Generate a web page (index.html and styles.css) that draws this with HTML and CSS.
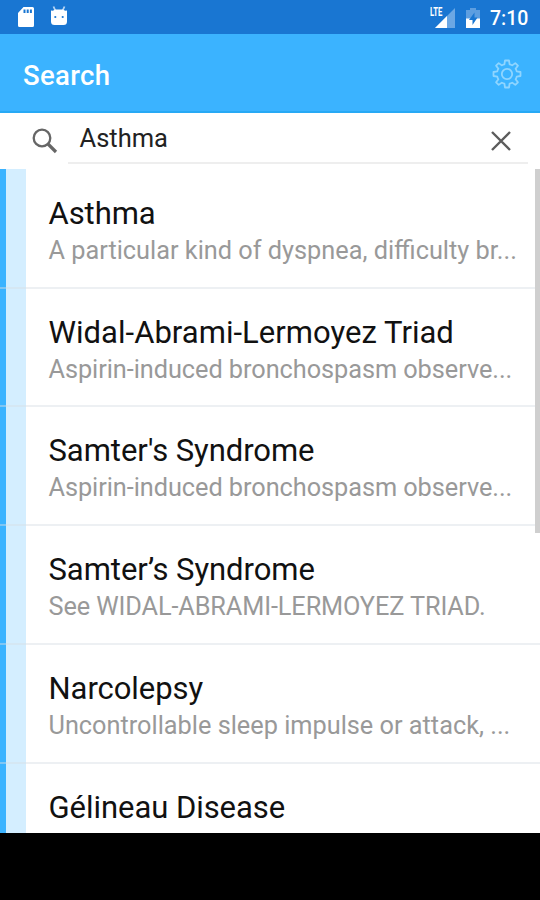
FILE: index.html
```html
<!DOCTYPE html>
<html lang="en">
<head>
<meta charset="utf-8">
<title>Search</title>
<link rel="stylesheet" href="styles.css">
</head>
<body>
<div class="screen">
  <header class="status">
    <svg class="sd" viewBox="0 0 16 20"><path fill="#fff" fill-rule="evenodd" d="M5.5 0H14.5Q16 0 16 1.500V18.500Q16 20 14.500 20H1.500Q0 20 0 18.500V6ZM5.500 2.500V6H7.500V2.500ZM8.700 2.500V6H10.700V2.500ZM11.900 2.500V6H13.900V2.500Z"/></svg>
    <svg class="droid" viewBox="0 0 18 20"><path d="M3.500 0.500L5.500 5M14.500 0.500L12.500 5" stroke="#b5d3f3" stroke-width="1.800"/><path fill="#fff" d="M1 4.500Q4 5 5 3.500H13Q14 5 17 4.500V15.500Q17 19 13.500 19H4.500Q1 19 1 15.500Z"/><circle cx="5.300" cy="11" r="1.100" fill="#1976d2"/><circle cx="12.700" cy="11" r="1.100" fill="#1976d2"/></svg>
    <span class="spacer"></span>
    <div class="signal"><svg viewBox="0 0 20 20"><path fill="#6ba7e4" d="M20 0V20H0Z"/><path fill="#fff" d="M12 8V20H0Z"/></svg><span class="lte">LTE</span></div>
    <svg class="battery" viewBox="0 0 14 20"><path fill="#5d9ee0" d="M4 0H10V2H14V11H0V2H4Z"/><path fill="#fff" d="M0 10.500H14V20H0Z"/><path fill="#1976d2" d="M8.500 4.500L3 12H6.500V17L11.500 9.500H8.500Z"/></svg>
    <span class="clock">7:10</span>
  </header>
  <div class="appbar">
    <h1>Search</h1>
    <svg class="gear" viewBox="-15 -15 30 30" fill="none" stroke="#8fd5ff" stroke-width="1.800" stroke-linejoin="round"><circle r="5.200"/><path d="M-2 -13.500H2L2.600 -9.700Q4 -9.500 5.200 -8.600L8.300 -10.900L10.900 -8.300L8.600 -5.200Q9.500 -4 9.700 -2.600L13.500 -2V2L9.700 2.600Q9.500 4 8.600 5.200L10.900 8.300L8.300 10.900L5.200 8.600Q4 9.500 2.600 9.700L2 13.500H-2L-2.600 9.700Q-4 9.500 -5.200 8.600L-8.300 10.900L-10.900 8.300L-8.600 5.200Q-9.500 4 -9.700 2.600L-13.500 2V-2L-9.700 -2.600Q-9.500 -4 -8.600 -5.200L-10.900 -8.300L-8.300 -10.900L-5.200 -8.600Q-4 -9.500 -2.600 -9.700Z"/></svg>
  </div>
  <div class="searchbar">
    <svg class="lens" viewBox="0 0 26 26" fill="none" stroke="#666"><circle cx="10" cy="10" r="8.300" stroke-width="2.300"/><path d="M16 16L24 24" stroke-width="3.200"/></svg>
    <div class="field"><span>Asthma</span>
      <svg class="clear" viewBox="0 0 20 20" stroke="#5c5c5c" stroke-width="2.400"><path d="M1 1L19 19M19 1L1 19"/></svg>
    </div>
  </div>
  <main class="results">
    <article class="row"><h2>Asthma</h2><p class="loose">A particular kind of dyspnea, difficulty br...</p></article>
    <article class="row"><h2 class="wide">Widal-Abrami-Lermoyez Triad</h2><p>Aspirin-induced bronchospasm observe...</p></article>
    <article class="row"><h2>Samter's Syndrome</h2><p>Aspirin-induced bronchospasm observe...</p></article>
    <article class="row"><h2>Samter’s Syndrome</h2><p class="caps">See WIDAL-ABRAMI-LERMOYEZ TRIAD.</p></article>
    <article class="row"><h2>Narcolepsy</h2><p class="loose">Uncontrollable sleep impulse or attack, ...</p></article>
    <article class="row"><h2>Gélineau Disease</h2></article>
    <div class="thumb"></div>
  </main>
</div>
</body>
</html>
```
FILE: styles.css
```css
* { box-sizing: border-box; }
body { margin: 0; background: #000; font-family: Roboto, sans-serif; }
h1, h2, p { margin: 0; font-weight: 400; white-space: nowrap; }
svg { display: block; flex: none; }
.screen { width: 540px; height: 900px; overflow: hidden; background: #000; }
.status { height: 34px; background: #1976d2; display: flex; align-items: center; padding: 0 11px 0 18px; }
.sd { width: 16px; height: 20px; }
.droid { width: 18px; height: 20px; margin: -3px 0 0 16px; }
.spacer { flex: 1; }
.signal { position: relative; margin-right: 11px; }
.signal svg { width: 20px; height: 20px; margin-top: 1px; }
.lte { position: absolute; left: -5px; top: -1px; color: #fff; font-size: 12px; line-height: 12px; font-weight: 700; transform: scaleX(.64); transform-origin: left; }
.battery { width: 14px; height: 20px; margin: 1px 10px 0 0; }
.clock { color: #fff; font-size: 19.5px; line-height: 34px; font-weight: 500; width: 39px; margin-top: 3px; }
.appbar { height: 79px; background: #3bb3ff; border-bottom: 2px solid #27a9f5; display: flex; align-items: center; justify-content: space-between; padding: 3px 18px 0 23px; }
.appbar h1 { color: #fff; font-size: 27.5px; font-weight: 500; line-height: 36px; letter-spacing: .35px; margin-top: 3px; }
.gear { width: 30px; height: 30px; margin-top: -1px; }
.searchbar { height: 56px; background: #fff; display: flex; padding: 0 12px 5px 32px; }
.lens { width: 26px; height: 26px; margin: 15px 10px 0 0; }
.field { flex: 1; display: flex; justify-content: space-between; border-bottom: 2px solid #eee; padding: 0 17px 0 11.5px; color: #222; font-size: 25.5px; line-height: 50px; }
.clear { width: 20px; height: 20px; margin-top: 18px; }
.results { position: relative; height: 664px; overflow: hidden; background: #fff; }
.row { height: 118.8px; padding: 24px 0 0 48.5px; background: linear-gradient(90deg, #3bb3ff 6px, #d4eeff 6px 26.5px, #fff 26.5px); border-bottom: 2px solid rgba(215, 222, 228, .45); }
.row:first-child { height: 119.6px; padding-top: 24.6px; }
.row h2 { color: #111; font-size: 31px; line-height: 40px; letter-spacing: -.05px; }
.row .wide { letter-spacing: .03px; }
.row p { color: #999; font-size: 25.3px; line-height: 34px; letter-spacing: -.05px; }
.row .caps { letter-spacing: -.11px; }
.row .loose { letter-spacing: 0; }
.thumb { position: absolute; right: 0; top: 0; width: 5px; height: 364px; background: #cfcfcf; }
```
